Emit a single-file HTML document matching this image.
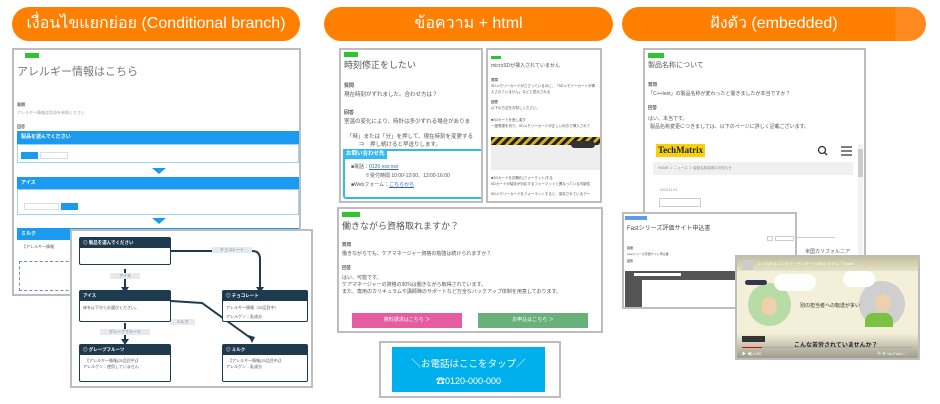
<!DOCTYPE html>
<html><head><meta charset="utf-8"><style>
*{margin:0;padding:0;box-sizing:border-box}
body{width:940px;height:404px;background:#fff;position:relative;overflow:hidden;font-family:"Liberation Sans","Noto Sans CJK JP",sans-serif;color:#444}
.a{position:absolute}
.pill{position:absolute;height:34px;top:7px;background:#ff7f00;border-radius:17px;color:#fff;font-size:16px;line-height:34px;text-align:center;font-family:"Liberation Sans","DejaVu Sans","Noto Sans CJK JP",sans-serif}
.card{position:absolute;background:#fff;border:2px solid #bdbdbd;overflow:hidden}
.badge{position:absolute;background:#2ec52e;height:5px;width:14px}
.t{position:absolute;white-space:nowrap;font-size:6px;color:#555}
.bh{position:absolute;background:#1a9bf0;color:#fff;font-size:5px;font-weight:bold;line-height:13px;padding-left:4px}
.bb{position:absolute;border:1px solid #9ed3f7;background:#fff}
.tri{position:absolute;width:0;height:0;border-left:7px solid transparent;border-right:7px solid transparent;border-top:6px solid #1a9bf0}
.node{position:absolute;border:1px solid #1e3a4f;background:#fff;border-radius:2px}
.nh{background:#1e3a4f;color:#fff;font-size:4.5px;height:10px;line-height:10px;padding-left:3px;font-weight:bold}
.lbl{position:absolute;background:#e6e9ee;color:#777;font-size:4px;height:6px;line-height:6px;text-align:center}
</style></head><body>

<!-- column 1 -->
<div class="pill" style="left:12px;width:288px">เงื่อนไขแยกย่อย (Conditional branch)</div>
<div class="card" style="left:12px;top:48px;width:289px;height:248px">
 <div class="badge" style="left:11px;top:3px"></div>
 <div class="t" style="left:3px;top:13px;font-size:11px;color:#777">アレルギー情報はこちら</div>
 <div class="t" style="left:3px;top:52px;font-size:4px;font-weight:bold">質問</div>
 <div class="t" style="left:3px;top:60px;font-size:4px;color:#999">アレルギー情報は別添を参照ください</div>
 <div class="t" style="left:3px;top:74px;font-size:4px;font-weight:bold">回答</div>
 <div class="bh" style="left:3px;top:81px;width:282px;height:13px">製品を選んでください</div>
 <div class="bb" style="left:3px;top:94px;width:282px;height:19px"><div class="a" style="left:3px;top:7px;width:17px;height:7px;background:#1a9bf0"></div><div class="a" style="left:22px;top:7px;width:28px;height:7px;border:1px solid #ddd"></div></div>
 <div class="tri" style="left:138px;top:118px"></div>
 <div class="bh" style="left:3px;top:127px;width:282px;height:12px">アイス</div>
 <div class="bb" style="left:3px;top:139px;width:282px;height:26px"><div class="a" style="left:6px;top:13px;width:35px;height:7px;border:1px solid #ddd"></div><div class="a" style="left:43px;top:13px;width:17px;height:7px;background:#1a9bf0"></div></div>
 <div class="tri" style="left:138px;top:168px"></div>
 <div class="bh" style="left:3px;top:178px;width:282px;height:12px">ミルク</div>
 <div class="t" style="left:8px;top:194px;font-size:4px">【アレルギー情報</div>
 <div class="a" style="left:5px;top:211px;width:60px;height:30px;border:1px dashed #6a8bb5"></div>
</div>
<div class="a" style="left:70px;top:229px;width:243px;height:159px;background:#fff;border:2px solid #bdbdbd">
 <svg class="a" style="left:0;top:0" width="240" height="156">
  <g stroke="#1e3a4f" stroke-width="2" fill="none">
   <path d="M99 20 L180 20 Q188 20 188 28 L188 58"/>
   <path d="M53 38 L53 58"/>
   <path d="M99 70 L130 72 L180 108"/>
   <path d="M53 92 L53 110"/>
  </g>
  <g fill="#1e3a4f"><path d="M184 56 L192 56 L188 62Z"/><path d="M49 56 L57 56 L53 62Z"/><path d="M176 104 L183 106 L180 112Z"/><path d="M49 108 L57 108 L53 114Z"/></g>
 </svg>
 <div class="lbl" style="left:140px;top:16px;width:40px">チョコレート</div>
 <div class="lbl" style="left:38px;top:42px;width:30px">アイス</div>
 <div class="lbl" style="left:98px;top:88px;width:25px">ミルク</div>
 <div class="lbl" style="left:28px;top:98px;width:50px">グレープフルーツ</div>
 <div class="node" style="left:7px;top:6px;width:92px;height:28px"><div class="nh">◎ 製品を選んでください</div></div>
 <div class="node" style="left:7px;top:59px;width:92px;height:32px"><div class="nh">アイス</div><div class="t" style="left:3px;top:14px;font-size:4px">味を以下からお選びください。</div></div>
 <div class="node" style="left:150px;top:59px;width:86px;height:32px"><div class="nh">◎ チョコレート</div><div class="t" style="left:3px;top:14px;font-size:4px">アレルギー情報（25品目中）</div><div class="t" style="left:3px;top:23px;font-size:4px">アレルゲン：乳成分</div></div>
 <div class="node" style="left:7px;top:113px;width:92px;height:38px"><div class="nh">◎ グレープフルーツ</div><div class="t" style="left:5px;top:13px;font-size:4px">【アレルギー情報(25品目中)】</div><div class="t" style="left:3px;top:19px;font-size:4px">アレルゲン：使用していません</div></div>
 <div class="node" style="left:150px;top:113px;width:86px;height:38px"><div class="nh">◎ ミルク</div><div class="t" style="left:5px;top:13px;font-size:4px">【アレルギー情報(25品目中)】</div><div class="t" style="left:3px;top:19px;font-size:4px">アレルゲン：乳成分</div></div>
</div>

<!-- column 2 -->
<div class="pill" style="left:324px;width:289px">ข้อความ + html</div>
<div class="card" style="left:339px;top:48px;width:144px;height:155px">
 <div class="badge" style="left:3px;top:2px"></div>
 <div class="t" style="left:3px;top:8px;font-size:9px;color:#555">時刻修正をしたい</div>
 <div class="t" style="left:3px;top:32px;font-size:5px;font-weight:bold">質問</div>
 <div class="t" style="left:3px;top:40px;font-size:5.5px">現在時刻がずれました。合わせ方は？</div>
 <div class="t" style="left:3px;top:59px;font-size:5px;font-weight:bold">回答</div>
 <div class="t" style="left:3px;top:67px;font-size:5.5px">室温の変化により、時計は多少ずれる場合がありま</div>
 <div class="t" style="left:6px;top:82px;font-size:5.5px">「時」または「分」を押して、現在時刻を変更する</div>
 <div class="t" style="left:18px;top:90px;font-size:5.5px">⇒　押し続けると早送りします。</div>
 <div class="a" style="left:2px;top:99px;width:150px;height:50px;border:2px solid #33b8f0;border-radius:3px"></div>
 <div class="a" style="left:2px;top:99px;width:44px;height:10px;background:#33b8f0;color:#fff;font-size:5.5px;font-weight:bold;line-height:10px;padding-left:3px">お問い合わせ先</div>
 <div class="t" style="left:10px;top:113px;font-size:5px">■電話：<span style="color:#36c;text-decoration:underline">0120-xxx-xxx</span></div>
 <div class="t" style="left:24px;top:122px;font-size:5px">※受付時間 10:00-12:00、13:00-16:00</div>
 <div class="t" style="left:10px;top:131px;font-size:5px">■Webフォーム：<span style="color:#36c;text-decoration:underline">こちらから</span></div>
</div>
<div class="card" style="left:486px;top:48px;width:116px;height:155px">
 <div class="badge" style="left:3px;top:6px;width:10px;height:3px"></div>
 <div class="t" style="left:3px;top:12px;font-size:5px">microSDが挿入されていません</div>
 <div class="t" style="left:3px;top:28px;font-size:3.5px;font-weight:bold">質問</div>
 <div class="t" style="left:3px;top:34px;font-size:3.5px">SDメモリーカードがささっているのに、「SDメモリーカードが挿</div>
 <div class="t" style="left:3px;top:40px;font-size:3.5px">入されていません」などと表示される</div>
 <div class="t" style="left:3px;top:50px;font-size:3.5px;font-weight:bold">回答</div>
 <div class="t" style="left:3px;top:56px;font-size:3.5px">以下の方法をお試しください。</div>
 <div class="t" style="left:3px;top:68px;font-size:3.5px">■SDカードを差し直す</div>
 <div class="t" style="left:3px;top:74px;font-size:3.5px">一度電源を切り、SDメモリーカードが正しい向きで挿入されて</div>
 <div class="a" style="left:3px;top:87px;width:115px;height:8px;background:repeating-linear-gradient(135deg,#222 0 3px,#d8b020 3px 6px)"></div>
 <div class="a" style="left:3px;top:95px;width:115px;height:25px;background:#eee"></div>
 <div class="a" style="left:83px;top:91px;width:24px;height:7px;background:#333;border-radius:4px"></div>
 <div class="t" style="left:3px;top:126px;font-size:3.5px">■SDカードを初期化(フォーマット)する</div>
 <div class="t" style="left:3px;top:132px;font-size:3.5px">SDカードが端末が対応するフォーマットと異なっている可能性</div>
 <div class="t" style="left:3px;top:142px;font-size:3.5px">SDメモリーカードをフォーマットすると、保存されているデー</div>
</div>
<div class="card" style="left:337px;top:207px;width:266px;height:126px">
 <div class="badge" style="left:3px;top:3px;width:18px"></div>
 <div class="t" style="left:3px;top:10px;font-size:9px;color:#555">働きながら資格取れますか？</div>
 <div class="t" style="left:3px;top:33px;font-size:4.5px;font-weight:bold">質問</div>
 <div class="t" style="left:3px;top:41px;font-size:5px">働きながらでも、ケアマネージャー資格の勉強は続けられますか？</div>
 <div class="t" style="left:3px;top:56px;font-size:4.5px;font-weight:bold">回答</div>
 <div class="t" style="left:3px;top:65px;font-size:5px">はい、可能です。</div>
 <div class="t" style="left:3px;top:72px;font-size:5px">ケアマネージャーの資格の90%は働きながら取得されています。</div>
 <div class="t" style="left:3px;top:79px;font-size:5px">また、専用のカリキュラムや講師陣のサポートなど万全なバックアップ体制を用意しております。</div>
 <div class="a" style="left:13px;top:104px;width:110px;height:15px;background:#e55ca0;color:#fff;font-size:5px;text-align:center;line-height:15px">資料請求はこちら ＞</div>
 <div class="a" style="left:139px;top:104px;width:110px;height:15px;background:#6ab07a;color:#fff;font-size:5px;text-align:center;line-height:15px">お申込はこちら ＞</div>
</div>
<div class="a" style="left:379px;top:341px;width:182px;height:57px;border:2px solid #bdbdbd;background:#fff">
 <div class="a" style="left:11px;top:4px;width:153px;height:45px;background:#00b0ec;color:#fff;text-align:center">
  <div style="font-size:9.5px;margin-top:9px">＼お電話はここをタップ／</div>
  <div style="font-size:9px;margin-top:4px">☎0120-000-000</div>
 </div>
</div>

<!-- column 3 -->
<div class="pill" style="left:622px;width:304px;background:linear-gradient(90deg,#ff7f00 90%,#ff8a20 90%)">ฝังตัว (embedded)</div>
<div class="card" style="left:643px;top:48px;width:223px;height:215px">
 <div class="badge" style="left:3px;top:3px;width:16px"></div>
 <div class="t" style="left:3px;top:10px;font-size:7px;color:#555">製品名称について</div>
 <div class="t" style="left:3px;top:32px;font-size:4.5px;font-weight:bold">質問</div>
 <div class="t" style="left:3px;top:40px;font-size:5px">「C++test」の製品名称が変わったと聞きましたが本当ですか？</div>
 <div class="t" style="left:3px;top:55px;font-size:4.5px;font-weight:bold">回答</div>
 <div class="t" style="left:3px;top:65px;font-size:5px">はい、本当です。</div>
 <div class="t" style="left:5px;top:73px;font-size:5px">製品名称変更につきましては、以下のページに詳しく記載ございます。</div>
 <div class="a" style="left:11px;top:94px;width:49px;height:13px;background:#f5d20a;color:#222;font-family:'Liberation Serif',serif;font-weight:bold;font-size:9px;line-height:13px;padding-left:2px">TechMatrix</div>
 <svg class="a" style="left:172px;top:95px" width="40" height="12"><circle cx="5" cy="5" r="3.5" stroke="#333" stroke-width="1.3" fill="none"/><path d="M7.5 7.5 L10 10" stroke="#333" stroke-width="1.3"/><path d="M24 2h11M24 6h11M24 10h11" stroke="#333" stroke-width="1.3"/></svg>
 <div class="a" style="left:8px;top:112px;width:200px;height:13px;background:#f0f0f0"></div>
 <div class="t" style="left:13px;top:116px;font-size:3.5px;color:#888">HOME ＞ ニュース ＞ 製品名称変更のお知らせ</div>
 <div class="t" style="left:15px;top:138px;font-size:3.5px;color:#888">2023.11.01</div>
 <div class="a" style="left:14px;top:148px;width:42px;height:9px;border:1px solid #ccc"></div>
 <div class="a" style="left:213px;top:94px;width:5px;height:120px;background:#f2f2f2"><div style="margin-top:5px;height:28px;background:#ccc"></div></div>
 <div class="a" style="left:130px;top:187px;width:60px;height:1px;background:#ccc"></div>
 <div class="t" style="left:160px;top:198px;font-size:5px">米国カリフォルニア</div>
</div>
<div class="card" style="left:622px;top:212px;width:175px;height:97px">
 <div class="a" style="left:1px;top:2px;width:22px;height:4px;background:#5b9cf0"></div>
 <div class="t" style="left:3px;top:9px;font-size:6px;color:#444">Fastシリーズ評価サイト申込書</div>
 <div class="a" style="left:143px;top:22px;width:6px;height:5px;border:1px solid #ccc"></div>
 <div class="a" style="left:151px;top:22px;width:19px;height:5px;border:1px solid #ccc"></div>
 <div class="t" style="left:3px;top:32px;font-size:3px;font-weight:bold">質問</div>
 <div class="t" style="left:3px;top:38px;font-size:3px">Fastシリーズ評価サイト申込書</div>
 <div class="t" style="left:3px;top:45px;font-size:3px;font-weight:bold">回答</div>
 <div class="a" style="left:1px;top:57px;width:173px;height:38px;background:#555"></div>
 <div class="a" style="left:10px;top:59px;width:47px;height:3px;background:#fff"></div>
 <div class="a" style="left:18px;top:66px;width:156px;height:30px;background:#fff"></div>
</div>
<div class="a" style="left:735px;top:255px;width:185px;height:105px;border:2px solid #bdbdbd;background:#f3efd8;overflow:hidden">
 <div class="a" style="left:0;top:0;width:181px;height:14px;background:linear-gradient(#c4c09e,#e6e2c6)"></div>
 <div class="a" style="left:5px;top:3px;width:11px;height:10px;background:#ccc"></div>
 <div class="t" style="left:20px;top:4px;font-size:4px;color:#fff">よくわかるコンタクトセンター CRMシステム「Fastle...</div>
 <div class="a" style="left:11px;top:26px;width:43px;height:43px;border-radius:50%;background:#b8dca6"></div>
 <div class="a" style="left:122px;top:24px;width:46px;height:46px;border-radius:50%;background:#cfcfcf"></div>
 <div class="a" style="left:37px;top:17px;width:42px;height:17px;border-radius:9px;background:#fff"></div>
 <div class="a" style="left:106px;top:14px;width:32px;height:16px;border-radius:8px;background:#fff"></div>
 <div class="a" style="left:8px;top:23px;width:22px;height:5px;border-radius:3px;background:#335"></div>
 <div class="a" style="left:24px;top:40px;width:16px;height:18px;border-radius:50%;background:#f0cfae"></div>
 <div class="a" style="left:138px;top:37px;width:16px;height:18px;border-radius:50%;background:#f0cfae"></div>
 <div class="a" style="left:128px;top:56px;width:28px;height:14px;border-radius:8px 8px 0 0;background:#7bc142"></div>
 <div class="t" style="left:63px;top:45px;font-size:5px;color:#333">別の担当者への転送が多い</div>
 <div class="a" style="left:0;top:76px;width:181px;height:25px;background:linear-gradient(rgba(0,0,0,0),rgba(0,0,0,0.35))"></div>
 <div class="a" style="left:5px;top:79px;width:23px;height:6px;background:#333"></div>
 <div class="t" style="left:57px;top:83px;font-size:6px;font-weight:bold;color:#222">こんな苦労されていませんか？</div>
 <div class="a" style="left:5px;top:90px;width:171px;height:1px;background:#aaa"></div>
 <div class="a" style="left:5px;top:90px;width:20px;height:1px;background:#e00"></div>
 <div class="t" style="left:5px;top:94px;font-size:4px;color:#fff">▶ ◀) 0:00</div>
 <div class="t" style="left:140px;top:94px;font-size:4px;color:#fff">▣ ⚙ YouTube ⛶</div>
</div>
</body></html>
